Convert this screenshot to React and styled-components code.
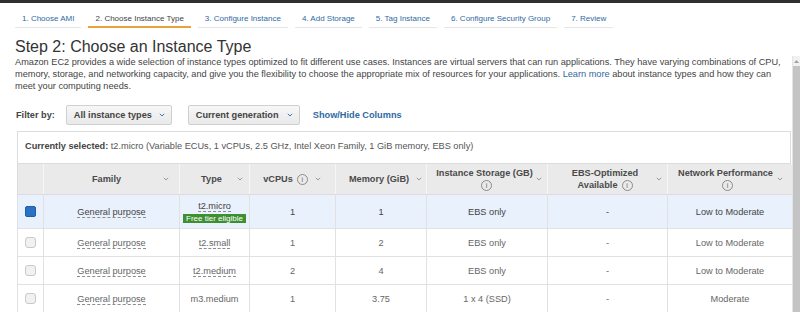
import React from 'react'
import styled, { createGlobalStyle } from 'styled-components'

const GlobalStyle = createGlobalStyle`
  html, body {
    margin: 0;
    padding: 0;
    background: #fff;
  }
  body {
    font-family: "Liberation Sans", Arial, sans-serif;
    color: #444;
  }
`

const Page = styled.div`
  width: 800px;
  height: 312px;
  overflow: hidden;
  display: flex;
  flex-direction: column;
`

const TopBar = styled.div`
  height: 3px;
  background: #2f2f2f;
  flex: none;
`

const TabBar = styled.nav`
  display: flex;
  align-items: flex-start;
  gap: 7px;
  padding: 10px 0 0 15px;
  flex: none;
`

const Tab = styled.div`
  font-size: 8px;
  line-height: 11px;
  padding: 0 7px ${(p) => (p.$active ? '2px' : '3px')};
  color: ${(p) => (p.$active ? '#444' : '#2f6aa3')};
  border-bottom: ${(p) => (p.$active ? '2px solid #e7a33c' : '1px solid #e6e6e6')};
  white-space: nowrap;
`

const Heading = styled.h1`
  margin: 10px 0 0 15px;
  font-size: 16px;
  line-height: 18px;
  font-weight: normal;
  color: #333;
  flex: none;
`

const Body = styled.div`
  flex: 1;
  display: flex;
  min-height: 0;
`

const Main = styled.div`
  flex: 1;
  padding: 0 1px 0 15px;
  min-width: 0;
`

const Intro = styled.p`
  margin: 0;
  font-size: 9.2px;
  line-height: 12px;
  color: #444;
  white-space: nowrap;
`

const Link = styled.span`
  color: #2f6aa3;
  font-weight: ${(p) => (p.$bold ? 'bold' : 'normal')};
`

const FilterRow = styled.div`
  display: flex;
  align-items: center;
  margin-top: 13px;
  padding-left: 1px;
  height: 20px;
  font-size: 9.2px;
`

const Label = styled.span`
  font-weight: bold;
  color: #444;
  margin-right: 11px;
`

const Select = styled.div`
  width: ${(p) => p.$width}px;
  height: 20px;
  box-sizing: border-box;
  display: flex;
  align-items: center;
  justify-content: space-between;
  padding: 0 6px 0 7px;
  margin-right: ${(p) => p.$gap}px;
  border: 1px solid #d0d0d0;
  border-radius: 2px;
  background: linear-gradient(#f7f7f7, #e9e9e9);
  font-weight: bold;
  color: #444;
`

const SelectedBox = styled.div`
  margin: 6px 0 0 2px;
  height: 33px;
  box-sizing: border-box;
  padding: 8px 7px 0;
  border: 1px solid #dcdcdc;
  font-size: 9.2px;
  line-height: 12px;
  color: #555;

  b {
    color: #444;
  }
`

const Table = styled.table`
  margin-left: 2px;
  width: 775px;
  border-collapse: collapse;
  table-layout: fixed;
  font-size: 9.2px;
`

const HeadCell = styled.th`
  height: 30px;
  padding: 0 ${(p) => p.$pad}px 0 6px;
  background: #eaeaea;
  border-left: 1px solid #f6f6f6;
  border-bottom: 1px solid #dcdcdc;
  font-weight: bold;
  color: #4a4a4a;
  line-height: 12px;

  &:first-child {
    border-left: 1px solid #dcdcdc;
  }
  &:last-child {
    border-right: 1px solid #dcdcdc;
  }
`

const HeadInner = styled.div`
  display: flex;
  align-items: center;
`

const HeadLabel = styled.div`
  flex: 1;
  text-align: center;
`

const Row = styled.tr`
  background: ${(p) => (p.$selected ? '#e8f1fc' : '#fff')};
  color: ${(p) => (p.$selected ? '#444' : '#666')};
`

const Cell = styled.td`
  height: ${(p) => (p.$tall ? 33 : 27)}px;
  padding: 0;
  text-align: ${(p) => (p.$left ? 'left' : 'center')};
  border: 1px solid #e1e1e1;
  border-top: none;
  line-height: 12px;
`

const Dotted = styled.span`
  border-bottom: 1px dashed #8c8c8c;
`

const Badge = styled.div`
  display: inline-block;
  margin-top: 2px;
  padding: 0 3px;
  background: #3e8f31;
  color: #fff;
  font-size: 8px;
  line-height: 9px;
`

const Checkbox = styled.span`
  display: block;
  width: 11px;
  height: 11px;
  margin-left: 7px;
  box-sizing: border-box;
  border-radius: ${(p) => (p.$checked ? '2px' : '3px')};
  border: 1px solid ${(p) => (p.$checked ? '#1d5ea6' : '#c9c9c9')};
  background: ${(p) => (p.$checked ? '#2a72c4' : '#f1f1f1')};
`

const Info = styled.span`
  display: inline-flex;
  align-items: center;
  justify-content: center;
  width: 9px;
  height: 9px;
  margin-left: 4px;
  border: 1px solid #8a8a8a;
  border-radius: 50%;
  font-size: 7px;
  font-weight: normal;
  color: #666;
  vertical-align: middle;
`

const Scrollbar = styled.div`
  width: 7px;
  flex: none;
  display: flex;
  flex-direction: column;
  background: #c4c4c4;
  border-left: 1px solid #e4e4e4;
`

const ScrollButton = styled.div`
  height: 10px;
  background: #f1f1f1;
  display: flex;
  align-items: center;
  justify-content: center;
`

const Caret = ({ color = '#9a9a9a' }) => (
  <svg width="6" height="4" viewBox="0 0 6 4">
    <path d="M0.8 0.8 L3 3 L5.2 0.8" fill="none" stroke={color} strokeWidth="1" />
  </svg>
)

const tabs = [
  '1. Choose AMI',
  '2. Choose Instance Type',
  '3. Configure Instance',
  '4. Add Storage',
  '5. Tag Instance',
  '6. Configure Security Group',
  '7. Review',
]

const columns = [
  { width: 26, pad: 6 },
  { width: 136, pad: 10, label: 'Family' },
  { width: 70, pad: 6, label: 'Type' },
  { width: 86, pad: 14, label: <>vCPUs<Info>i</Info></> },
  { width: 91, pad: 4, label: 'Memory (GiB)' },
  { width: 121, pad: 5, label: <>Instance Storage (GB)<br /><Info>i</Info></> },
  { width: 120, pad: 5, label: <>EBS-Optimized<br />Available<Info>i</Info></> },
  { width: 125, pad: 9, label: <>Network Performance<br /><Info>i</Info></> },
]

const instances = [
  { type: 't2.micro', cpus: 1, mem: '1', storage: 'EBS only', net: 'Low to Moderate', selected: true, free: true },
  { type: 't2.small', cpus: 1, mem: '2', storage: 'EBS only', net: 'Low to Moderate' },
  { type: 't2.medium', cpus: 2, mem: '4', storage: 'EBS only', net: 'Low to Moderate' },
  { type: 'm3.medium', cpus: 1, mem: '3.75', storage: '1 x 4 (SSD)', net: 'Moderate', plain: true },
]

const App = () => {
  return (
    <>
      <GlobalStyle />
      <Page>
        <TopBar />
        <TabBar>
          {tabs.map((t, i) => (
            <Tab key={t} $active={i === 1}>
              {t}
            </Tab>
          ))}
        </TabBar>
        <Heading>Step 2: Choose an Instance Type</Heading>
        <Body>
          <Main>
            <Intro>
              Amazon EC2 provides a wide selection of instance types optimized to fit different use cases. Instances are virtual servers that can run applications. They have varying combinations of CPU,
              <br />
              memory, storage, and networking capacity, and give you the flexibility to choose the appropriate mix of resources for your applications.{' '}
              <Link>Learn more</Link> about instance types and how they can
              <br />
              meet your computing needs.
            </Intro>

            <FilterRow>
              <Label>Filter by:</Label>
              <Select $width={106} $gap={16}>
                All instance types <Caret color="#3d78b5" />
              </Select>
              <Select $width={112} $gap={13}>
                Current generation <Caret color="#3d78b5" />
              </Select>
              <Link $bold>Show/Hide Columns</Link>
            </FilterRow>

            <SelectedBox>
              <b>Currently selected:</b> t2.micro (Variable ECUs, 1 vCPUs, 2.5 GHz, Intel Xeon Family, 1 GiB memory, EBS only)
            </SelectedBox>

            <Table>
              <colgroup>
                {columns.map((c, i) => (
                  <col key={i} style={{ width: c.width }} />
                ))}
              </colgroup>
              <thead>
                <tr>
                  {columns.map((c, i) => (
                    <HeadCell key={i} $pad={c.pad}>
                      {c.label && (
                        <HeadInner>
                          <HeadLabel>{c.label}</HeadLabel>
                          <Caret />
                        </HeadInner>
                      )}
                    </HeadCell>
                  ))}
                </tr>
              </thead>
              <tbody>
                {instances.map((r) => (
                  <Row key={r.type} $selected={r.selected}>
                    <Cell $tall={r.selected} $left>
                      <Checkbox $checked={r.selected} />
                    </Cell>
                    <Cell $tall={r.selected}>
                      <Dotted>General purpose</Dotted>
                    </Cell>
                    <Cell $tall={r.selected}>
                      {r.plain ? r.type : <Dotted>{r.type}</Dotted>}
                      {r.free && (
                        <div>
                          <Badge>Free tier eligible</Badge>
                        </div>
                      )}
                    </Cell>
                    <Cell $tall={r.selected}>{r.cpus}</Cell>
                    <Cell $tall={r.selected}>{r.mem}</Cell>
                    <Cell $tall={r.selected}>{r.storage}</Cell>
                    <Cell $tall={r.selected}>-</Cell>
                    <Cell $tall={r.selected}>{r.net}</Cell>
                  </Row>
                ))}
              </tbody>
            </Table>
          </Main>
          <Scrollbar>
            <ScrollButton>
              <svg width="5" height="3" viewBox="0 0 5 3">
                <path d="M0 3 L2.5 0 L5 3 Z" fill="#a0a0a0" />
              </svg>
            </ScrollButton>
          </Scrollbar>
        </Body>
      </Page>
    </>
  )
}

export default App
